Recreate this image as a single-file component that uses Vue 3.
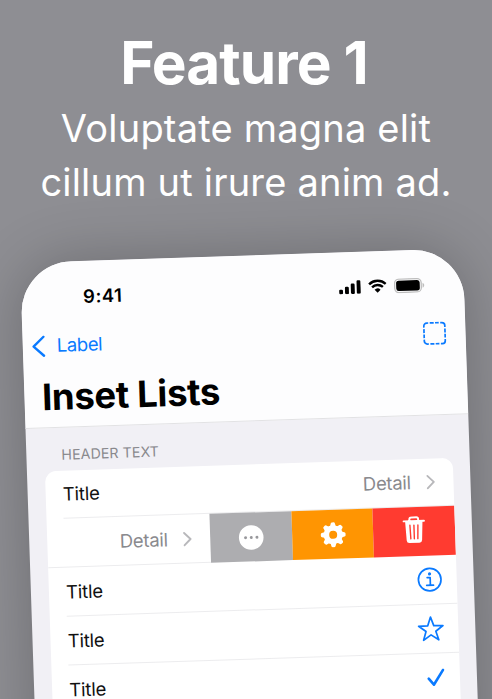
<script setup>
const signalBars = [
  { x: 0, h: 4.6 },
  { x: 5.9, h: 7.4 },
  { x: 11.8, h: 10.4 },
  { x: 17.7, h: 13.6 },
]
const teeth = [0, 45, 90, 135, 180, 225, 270, 315]
</script>

<template>
  <main class="poster">
    <header class="intro">
      <h1>Feature 1</h1>
      <p><span>Voluptate magna elit</span><span>cillum ut irure anim ad.</span></p>
    </header>

    <section class="phone">
      <div class="top">
        <div class="status">
          <span class="time">9:41</span>
          <div class="indicators">
            <svg class="signal" width="22" height="14" viewBox="0 0 22 14">
              <rect v-for="b in signalBars" :key="b.x" :x="b.x" :y="14 - b.h" width="3.9" :height="b.h" rx="1.2" />
            </svg>
            <svg class="wifi" width="19" height="14" viewBox="0 0 19 14">
              <path d="M1.2 4.9a12 12 0 0 1 16.6 0M4.1 8a7.8 7.8 0 0 1 10.8 0" fill="none" stroke="#000" stroke-width="2.4" />
              <path d="M9.5 13.6 6.5 10.6a4.3 4.3 0 0 1 6 0z" />
            </svg>
            <svg class="battery" width="31" height="15" viewBox="0 0 31 15">
              <rect x=".7" y=".7" width="26.6" height="13.4" rx="4.2" fill="none" stroke="#bdbdbd" stroke-width="1.3" />
              <rect x="2.2" y="2.2" width="23.6" height="10.4" rx="2.6" />
              <path d="M28.6 5v5c1-.4 1.7-1.4 1.7-2.5S29.600 5.400 28.600 5z" fill="#bdbdbd" />
            </svg>
          </div>
        </div>
        <div class="nav">
          <svg class="back" width="14" height="22" viewBox="0 0 14 22">
            <path d="M12 1.500 1.800 11 12 20.500" />
          </svg>
          <span class="back-label">Label</span>
          <svg class="placeholder" width="24" height="24" viewBox="0 0 24 24">
            <path d="M1.500 6V4.500a3 3 0 0 1 3-3H6M18 1.500h1.500a3 3 0 0 1 3 3V6M22.500 18v1.500a3 3 0 0 1-3 3H18M6 22.500H4.500a3 3 0 0 1-3-3V18M7.500 1.500h4M12.800 1.500h3.700M7.500 22.500h4M12.800 22.500h3.700M1.500 7.500v4M1.500 12.800v3.700M22.500 7.500v4M22.500 12.800v3.700" />
          </svg>
        </div>
        <h2>Inset Lists</h2>
      </div>

      <div class="group-title">HEADER TEXT</div>
      <div class="list">
        <div class="row line">
          <span class="title">Title</span>
          <span class="detail">Detail</span>
          <svg class="chevron" width="9" height="15" viewBox="0 0 9 15"><path d="m1 1.300 6.300 6.200L1 13.700" /></svg>
        </div>
        <div class="row swiped">
          <div class="content">
            <span class="detail">Detail</span>
            <svg class="chevron" width="9" height="15" viewBox="0 0 9 15"><path d="m1 1.300 6.300 6.200L1 13.700" /></svg>
          </div>
          <div class="action more">
            <svg width="26" height="26" viewBox="0 0 26 26">
              <circle cx="13" cy="13" r="12.300" fill="#fff" />
              <g fill="#98989c"><circle cx="7.300" cy="13" r="1.500" /><circle cx="13" cy="13" r="1.500" /><circle cx="18.700" cy="13" r="1.500" /></g>
            </svg>
          </div>
          <div class="action settings">
            <svg width="26" height="26" viewBox="0 0 26 26">
              <circle cx="13" cy="13" r="6.800" fill="none" stroke="#fff" stroke-width="5.600" />
              <path v-for="a in teeth" :key="a" d="M10 5 10.900 1.700Q11.200.600 12.200.600h1.600q1 0 1.300 1.100L16 5z" fill="#fff" :transform="`rotate(${a} 13 13)`" />
            </svg>
          </div>
          <div class="action remove">
            <svg width="24" height="28" viewBox="0 0 24 28">
              <path d="M7.600 4.500V3.200Q7.600 1.300 9.500 1.300h5q1.900 0 1.900 1.900v1.300M1.800 5h20.400" fill="none" stroke="#fff" stroke-width="1.900" stroke-linecap="round" />
              <path d="M3.300 5h17.400l-1 19.200q-.2 2.600-2.700 2.600H7q-2.500 0-2.700-2.600z" fill="#fff" />
              <path d="m8 9 .5 13.700M12 9v13.700M16 9l-.5 13.700" fill="none" stroke="#ff3b30" stroke-width="1.400" stroke-linecap="round" />
            </svg>
          </div>
        </div>
        <div class="row line">
          <span class="title">Title</span>
          <svg class="accessory" width="26" height="26" viewBox="0 0 26 26">
            <circle cx="13" cy="13" r="11.300" />
            <path d="M10.500 11h3v7.500M9.800 18.700h6.800" />
            <circle cx="13" cy="7.300" r="1.600" class="solid" />
          </svg>
        </div>
        <div class="row line">
          <span class="title">Title</span>
          <svg class="accessory star" width="27" height="26" viewBox="0 0 27 26">
            <path d="m13.500 1.500 3 8.600 9.200.2-7.300 5.500 2.700 8.700-7.600-5.200-7.600 5.200 2.700-8.700-7.300-5.500 9.200-.2z" />
          </svg>
        </div>
        <div class="row line">
          <span class="title">Title</span>
          <svg class="accessory check" width="18" height="18" viewBox="0 0 18 18">
            <path d="m1.700 10 5 6.200L16.300 1.700" />
          </svg>
        </div>
        <div class="row line"></div>
        <div class="row"></div>
      </div>
    </section>
  </main>
</template>

<style>
body {
  background: #8e8e93;
}
</style>

<style scoped>
.poster {
  height: 699px;
  overflow: hidden;
  background: #8e8e93;
  font-family: Inter, "Liberation Sans", sans-serif;
}
.intro {
  height: 262.5px;
  box-sizing: border-box;
  padding-top: 28px;
  color: #fff;
  text-align: center;
}
h1 {
  margin: 0;
  padding-right: 4px;
  font-size: 58.500px;
  line-height: 70px;
  font-weight: 650;
  letter-spacing: -0.950px;
  white-space: nowrap;
}
.intro p {
  margin: 3px 0 0;
  font-size: 38px;
  line-height: 54px;
  font-weight: 400;
  letter-spacing: 0.200px;
  white-space: nowrap;
}
.intro p span {
  display: block;
}
.phone {
  width: 443px;
  height: 900px;
  margin-left: 20.200px;
  overflow: hidden;
  border-radius: 51px;
  background: #f1f0f5;
  box-shadow: 0 0 60px rgba(0, 0, 0, 0.24);
  transform: rotate(-1.900deg);
  transform-origin: 0 0;
}
.top {
  box-sizing: border-box;
  height: 165.500px;
  background: #fdfdfe;
  border-bottom: 1px solid #e2e2e4;
}
.status {
  display: flex;
  justify-content: space-between;
  align-items: center;
  height: 50px;
  padding: 20px 39px 0 62px;
  box-sizing: border-box;
}
.time {
  margin-top: -1px;
  font-size: 18.500px;
  font-weight: 600;
  letter-spacing: 0.450px;
}
.indicators {
  display: flex;
  align-items: center;
  gap: 7px;
}
.nav {
  display: flex;
  align-items: center;
  height: 68px;
  padding: 0 19px 0 9px;
  box-sizing: border-box;
}
.back,
.placeholder {
  fill: none;
  stroke: #0a7aff;
}
.back {
  margin-top: -1px;
  stroke-width: 2.400;
  stroke-linecap: round;
  stroke-linejoin: round;
}
.back-label {
  margin: -2px 0 0 11px;
  font-size: 18.500px;
  letter-spacing: -0.400px;
  color: #0a7aff;
}
.placeholder {
  margin-left: auto;
  stroke-width: 1.700;
}
h2 {
  margin: -6px 0 0;
  padding-left: 17.500px;
  font-size: 36.500px;
  line-height: 46px;
  font-weight: 700;
  letter-spacing: -0.330px;
  white-space: nowrap;
}
.group-title {
  height: 43px;
  padding: 17px 0 0 35px;
  box-sizing: border-box;
  font-size: 14.200px;
  line-height: 20px;
  letter-spacing: 0.080px;
  color: #89898d;
}
.list {
  width: 408px;
  margin-left: 17.700px;
  overflow: hidden;
  border-radius: 11px;
  background: #fff;
}
.row {
  display: flex;
  align-items: center;
  height: 48.800px;
  padding: 0 17.500px;
  box-sizing: border-box;
}
.line {
  background: linear-gradient(#ececee, #ececee) 17.500px 100% / 100% 1px no-repeat;
}
.title {
  margin-top: -1px;
  font-size: 18.500px;
  letter-spacing: -0.200px;
  color: #111;
}
.detail {
  margin: -1px 0 0 auto;
  font-size: 18.500px;
  letter-spacing: -0.300px;
  color: #8a8a8e;
}
.chevron {
  margin-left: 16px;
  fill: none;
  stroke: #b8b8bb;
  stroke-width: 1.900;
  stroke-linecap: round;
  stroke-linejoin: round;
}
.swiped {
  padding: 0;
  align-items: stretch;
}
.content {
  display: flex;
  flex: 1;
  align-items: center;
  padding-right: 17.500px;
  border-bottom: 1px solid #ececee;
}
.action {
  display: flex;
  align-items: center;
  justify-content: center;
  width: 81.600px;
}
.more {
  background: #adadb0;
}
.settings {
  padding-left: 2px;
  box-sizing: border-box;
  background: #ff9502;
}
.remove {
  padding-bottom: 3px;
  background: #ff3b30;
}
.accessory {
  margin: 0 -4px 0 auto;
  fill: none;
  stroke: #0a7aff;
  stroke-width: 1.700;
  stroke-linejoin: round;
  stroke-linecap: round;
}
.check {
  margin-right: -3px;
  stroke-width: 2.600;
}
.solid {
  fill: #0a7aff;
  stroke: none;
}
</style>
